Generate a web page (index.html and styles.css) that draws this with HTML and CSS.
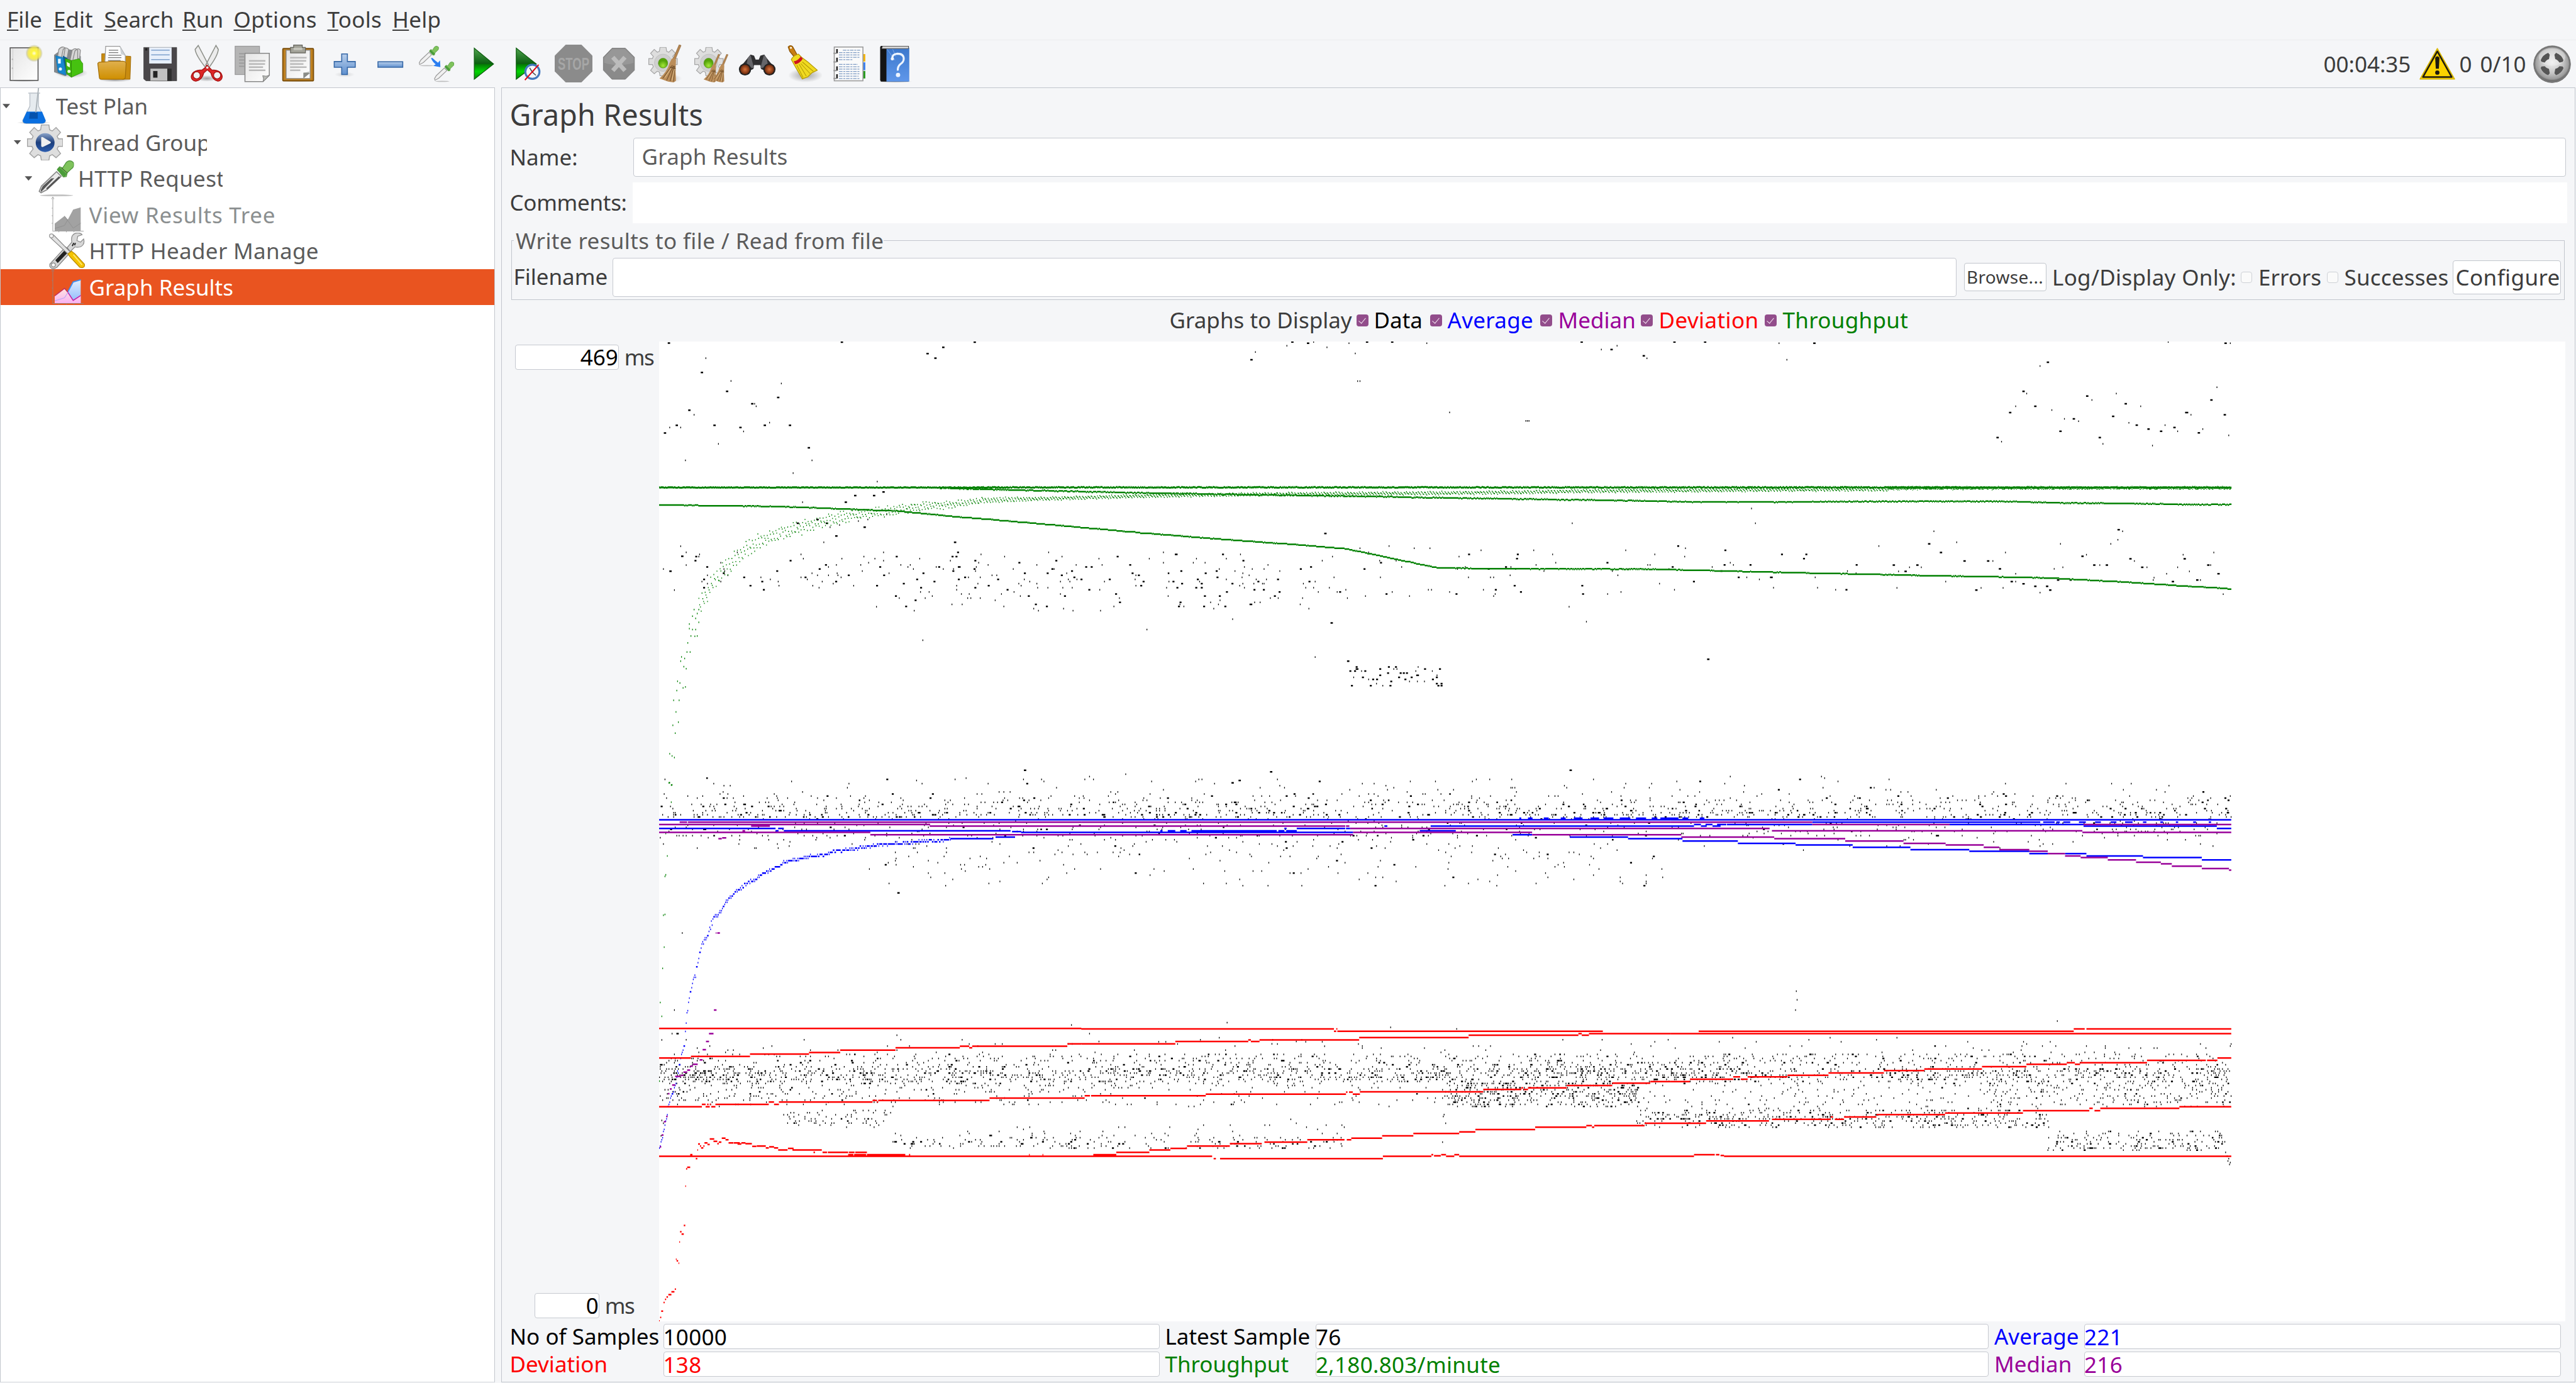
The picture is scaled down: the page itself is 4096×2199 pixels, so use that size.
FILE: index.html
```html
<!DOCTYPE html>
<html lang="en">
<head>
<meta charset="utf-8">
<title>Apache JMeter - Graph Results</title>
<link rel="stylesheet" href="styles.css">
</head>
<body>
<svg width="0" height="0" class="defs" aria-hidden="true">
  <defs>
    <linearGradient id="gPaper" x1="0" y1="0" x2="1" y2="1"><stop offset="0" stop-color="#e4e4e4"/><stop offset="1" stop-color="#fff"/></linearGradient>
    <linearGradient id="gGold" x1="0" y1="0" x2="0" y2="1"><stop offset="0" stop-color="#e0b04e"/><stop offset="1" stop-color="#cf8f00"/></linearGradient>
    <linearGradient id="gBlue" x1="0" y1="0" x2="0" y2="1"><stop offset="0" stop-color="#b9cfeb"/><stop offset="1" stop-color="#5f90cf"/></linearGradient>
    <linearGradient id="gPlay" x1="0" y1="0" x2="0" y2="1"><stop offset="0" stop-color="#4fa44f"/><stop offset=".5" stop-color="#0b5f10"/><stop offset=".52" stop-color="#047a04"/><stop offset=".75" stop-color="#03d503"/><stop offset="1" stop-color="#068a06"/></linearGradient>
    <linearGradient id="gHelp" x1="0" y1="0" x2="0" y2="1"><stop offset="0" stop-color="#3c78cc"/><stop offset="1" stop-color="#5f97ea"/></linearGradient>
    <radialGradient id="gSun"><stop offset="0" stop-color="#fffde0"/><stop offset=".3" stop-color="#fdf63c"/><stop offset=".7" stop-color="#f3e64a" stop-opacity=".85"/><stop offset="1" stop-color="#8c8a50" stop-opacity="0"/></radialGradient>
    <radialGradient id="gLime" cx=".5" cy=".75"><stop offset="0" stop-color="#a5e83a"/><stop offset="1" stop-color="#55a40a"/></radialGradient>
    <radialGradient id="gBall" cx=".5" cy=".45"><stop offset="0" stop-color="#f0f0f0"/><stop offset=".6" stop-color="#c4c4c4"/><stop offset=".9" stop-color="#9b9b9b"/><stop offset="1" stop-color="#666"/></radialGradient>
    <radialGradient id="gShade"><stop offset="0" stop-color="#000" stop-opacity=".35"/><stop offset="1" stop-color="#000" stop-opacity="0"/></radialGradient>
    <radialGradient id="gLens"><stop offset="0" stop-color="#d8713a"/><stop offset="1" stop-color="#6e2a0c"/></radialGradient>
    <linearGradient id="gNavy" x1="0" y1="0" x2="0" y2="1"><stop offset="0" stop-color="#8ba3c9"/><stop offset=".5" stop-color="#1d3f7c"/><stop offset="1" stop-color="#2c5db0"/></linearGradient>
    <linearGradient id="gPink" x1="0" y1="0" x2="0" y2="1"><stop offset="0" stop-color="#ffe4e0"/><stop offset="1" stop-color="#f9b2f3"/></linearGradient>
    <linearGradient id="gSky" x1="0" y1="0" x2="0" y2="1"><stop offset="0" stop-color="#e3efff"/><stop offset="1" stop-color="#8ab8fb"/></linearGradient>
    <symbol id="dropper" viewBox="0 0 96 96">
      <ellipse cx="50" cy="93" rx="44" ry="2.5" fill="#999" opacity=".6"/>
      <path d="M9 86 4 82 10 68 50 30 62 42 24 78Z" fill="#e9e9e9" stroke="#8a8a8a" stroke-width="3"/>
      <path d="M9 84 8 79 13 69 36 48 44 47 24 68Z" fill="#555"/>
      <path d="M24 76 58 44" stroke="#555" stroke-width="5"/>
      <path d="M52 24 58 17 66 20 76 5Q86-3 95 6 98 16 90 22L78 33 76 43 68 44Z" fill="#7fc35c" stroke="#4a9139" stroke-width="2"/>
      <path d="M51 26 57 18 77 36 71 44Z" fill="#4a9c3a"/>
      <path d="M63 20 79 34" stroke="#3d662f" stroke-width="2"/>
    </symbol>
    <symbol id="pale" viewBox="0 0 96 96">
      <ellipse cx="40" cy="93" rx="34" ry="2.5" fill="#999" opacity=".6"/>
      <path d="M6 88 4 80 12 66 50 30 62 42 24 78Z" fill="#f0f0f0" stroke="#9a9a9a" stroke-width="3.500"/>
      <path d="M52 24 58 17 66 20 76 5Q86-3 95 6 98 16 90 22L78 33 76 43 68 44Z" fill="#7fc35c" stroke="#4a9139" stroke-width="2"/>
      <path d="M51 26 57 18 77 36 71 44Z" fill="#4a9c3a"/>
    </symbol>
    <symbol id="gear" viewBox="0 0 96 96">
      <path d="M38 1H58L60 14 67 17 77 8 89 21 80 31 83 38H95V58H83L80 65 89 77 77 88 67 80 60 83 58 95H38L36 83 29 80 19 88 7 77 16 65 13 58H1V38H13L16 31 7 21 19 8 29 17 36 14Z" fill="#dedede" stroke="#a5a5a5" stroke-width="2.5"/>
    </symbol>
    <symbol id="areas" viewBox="0 0 96 96">
      <path d="M10 5V91H92M10 0 7 6M10 0 13 6M7 30H10M7 50H10M7 70H10M26 91V94M46 91V94M66 91V94" fill="none" stroke="#888" stroke-width="1.8" opacity=".75"/>
    </symbol>
    <symbol id="corn" viewBox="0 0 60 96">
      <path d="M52 0 57 2 42 38 36 37Z" fill="#b5854f" stroke="#85613a"/>
      <path d="M33 36Q38 32 44 38L43 66 44 92 38 96 24 94 2 86Q22 68 27 48Z" fill="#bb8d59"/>
      <path d="M35 52 10 86M37 54 20 91M39 54 29 93M41 54 38 94M28 57 43 61" stroke="#71502c" stroke-width="1.7" fill="none"/>
      <path d="M31 60 16 84M40 62 34 91" stroke="#e8c795" stroke-width="1.5"/>
    </symbol>
  </defs>
</svg>

<nav class="menubar">
  <span><u>F</u>ile</span><span><u>E</u>dit</span><span><u>S</u>earch</span><span><u>R</u>un</span><span class="wide"><u>O</u>ptions</span><span class="wide"><u>T</u>ools</span><span class="wide"><u>H</u>elp</span>
</nav>

<header class="toolbar">
  <div class="tools">
    <svg viewBox="0 0 96 96"><ellipse cx="48" cy="90" rx="42" ry="5" fill="url(#gShade)"/><rect x="13" y="8" width="71" height="83" fill="url(#gPaper)" stroke="#555" stroke-width="2.5"/><path d="M20 10V90" stroke="#ccc" stroke-width="1.5"/><circle cx="19" cy="37" r="2" fill="#bbb"/><circle cx="19" cy="60" r="2" fill="#bbb"/><circle cx="74" cy="22" r="22" fill="url(#gSun)"/></svg>
    <svg viewBox="0 0 96 96"><ellipse cx="52" cy="72" rx="42" ry="13" fill="url(#gShade)"/><path d="M8 26 30 10 60 14 76 30V60L36 80 8 70Z" fill="#85898c"/><path d="M17 30 20 12Q28 2 36 8L32 36M27 32 31 12Q38 4 45 12L40 40M48 42 54 14Q62 6 68 14V40M56 38 61 16Q70 6 75 14L73 34" fill="#d6d6d6" stroke="#8a8a8a" stroke-width="2"/><path d="M12 28 32 33 38 78 18 70Z" fill="#1787cf" stroke="#0b67a3"/><path d="M30 28 42 34 40 76 32 40Z" fill="#0b5e97"/><path d="M36 35 52 40V83L40 74Z" fill="#3db30c" stroke="#287d05"/><path d="M52 40 72 36 81 48V70L52 83Z" fill="#46c210" stroke="#287d05"/><path d="M40 44 48 48V58L41 54Z" fill="#e9ffe0"/><rect x="18" y="36" width="7" height="12" fill="#e8f6ff"/><circle cx="46" cy="68" r="4" fill="#e9ffe0"/><circle cx="24" cy="62" r="4" fill="#e8f6ff"/></svg>
    <svg viewBox="0 0 96 96"><ellipse cx="48" cy="90" rx="42" ry="5" fill="url(#gShade)"/><path d="M14 23H24V40H70L76 29 88 30 86 88 66 88 14 60Z" fill="#c98c10" stroke="#a06a05" stroke-width="1.5"/><path d="M24 4H60L74 28V46H22Z" fill="#fdfdfd" stroke="#999" stroke-width="2"/><path d="M60 4 74 28 63 24Z" fill="#ccd2d6"/><path d="M32 14H56M32 20H56M31 27H64M30 33H64M30 40H62" stroke="#777" stroke-width="2"/><path d="M4 48Q5 44 12 44 26 45 36 42H68Q76 43 76 48L74 84Q73 88 68 88H14Q8 88 8 84Z" fill="url(#gGold)" stroke="#a46f08" stroke-width="2"/></svg>
    <svg viewBox="0 0 96 96"><ellipse cx="48" cy="91" rx="44" ry="4" fill="url(#gShade)"/><path d="M4 7H88V92H10L4 87Z" fill="#4a474a" stroke="#333"/><rect x="18" y="7" width="57" height="41" fill="#e7effa"/><path d="M23 14H70M23 26H70M23 38H70" stroke="#7c9fcb" stroke-width="2.2"/><rect x="21" y="61" width="54" height="31" fill="#2e2e2e"/><rect x="21" y="61" width="43" height="31" fill="#c1c1c1"/><rect x="28" y="67" width="11" height="17" fill="#222"/><rect x="8" y="9" width="5" height="6" fill="#222"/></svg>
    <svg viewBox="0 0 96 96"><ellipse cx="48" cy="86" rx="28" ry="8" fill="url(#gShade)"/><path d="M26 2 52 52 46 60Q20 28 18 12ZM71 2 45 52 52 60Q76 28 77 12Z" fill="#ececec" stroke="#8c8f88" stroke-width="2.5"/><path d="M44 58 48 52 54 58 60 64Q86 64 87 82 86 92 76 93 62 90 58 72L49 64 40 72Q36 90 20 93 9 92 8 82 10 64 36 64Z" fill="#dc2626" stroke="#a51212" stroke-width="2"/><ellipse cx="22" cy="78" rx="9" ry="9" fill="#f1f1f1" stroke="#a51212" stroke-width="2"/><ellipse cx="74" cy="78" rx="9" ry="9" fill="#f1f1f1" stroke="#a51212" stroke-width="2"/><circle cx="49" cy="58" r="3" fill="#eee"/></svg>
    <svg viewBox="0 0 96 96"><rect x="3" y="4" width="62" height="72" fill="#b5b5b5" stroke="#999" stroke-width="2"/><path d="M13 23H26M13 31H26M13 39H26M13 47H26M13 55H26" stroke="#999" stroke-width="3"/><path d="M28 22H90V78L74 94H28Z" fill="url(#gPaper)" stroke="#888" stroke-width="2.5"/><path d="M38 41H80M38 49H79M38 57H74M38 65H80" stroke="#b9b9b9" stroke-width="4"/><path d="M90 78 74 94Q77 86 73 79 82 82 90 78Z" fill="#b8bab5" stroke="#777" stroke-width="1.5"/></svg>
    <svg viewBox="0 0 96 96"><ellipse cx="48" cy="91" rx="44" ry="4" fill="url(#gShade)"/><rect x="7.500" y="10" width="78" height="82" rx="2" fill="#bf8120" stroke="#7c4f0b" stroke-width="3"/><path d="M16 14H77V86H16Z" fill="url(#gPaper)" stroke="#888" stroke-width="2"/><path d="M26 33H68M26 41H67M26 49H60M26 57H68M26 65H52" stroke="#bbb" stroke-width="4"/><path d="M60 86V72L77 68Z" fill="#b8bab5"/><path d="M77 72 60 86V71Z" fill="#8a8c87"/><path d="M35 1H57V7H65V21H27V7H35Z" fill="#a2a298" stroke="#63635b" stroke-width="2"/><rect x="35" y="8" width="22" height="6" fill="#c4c4bb"/></svg>
    <svg viewBox="0 0 96 96"><ellipse cx="48" cy="76" rx="26" ry="7" fill="url(#gShade)" opacity=".4"/><path d="M40.500 23.500H55V43H75V57.500H55V76H40.500V57.500H21.500V43H40.500Z" fill="url(#gBlue)" stroke="#3567a6" stroke-width="2.5"/></svg>
    <svg viewBox="0 0 96 96"><rect x="16" y="43.500" width="63" height="14" fill="url(#gBlue)" stroke="#3567a6" stroke-width="2.5"/></svg>
    <svg viewBox="0 0 96 96"><use href="#pale" x="2" y="2" width="52" height="54"/><use href="#pale" x="41" y="42" width="52" height="54"/><path d="M34 34Q38 44 46 50L40 54 58 57 57 40 52 46Q44 40 38 34Z" fill="#2b7df0"/></svg>
    <svg viewBox="0 0 96 96"><path d="M29 9V88L78 49Z" fill="url(#gPlay)" stroke="#0a5a0a" stroke-width="2"/></svg>
    <svg viewBox="0 0 96 96"><path d="M19 9V88L70 49Z" fill="url(#gPlay)" stroke="#0a5a0a" stroke-width="2"/><circle cx="60" cy="69" r="18" fill="#f4f7fb" stroke="#4379bd" stroke-width="5"/><path d="M53 59 60 70 69 78M60 70 66 62" stroke="#444" stroke-width="2.5" fill="none"/><path d="M76 51 41 90" stroke="#e30613" stroke-width="3"/></svg>
    <svg viewBox="0 0 96 96"><path d="M28 0H68L96 28V68L68 96H28L0 68V28Z" fill="#8b8b8b"/><text x="48" y="64" class="stop" text-anchor="middle" textLength="80" lengthAdjust="spacingAndGlyphs">STOP</text></svg>
    <svg viewBox="0 0 96 96"><path d="M29 9H63L86 32V65L63 88H29L7 65V32Z" fill="#8a8a8a" stroke="#777" stroke-width="1.500"/><path d="M9 33 30 11H62L84 33V46Q46 58 9 46Z" fill="#a0a0a0" opacity=".6"/><path d="M31 32 62 66M62 32 31 66" stroke="#bcbcbc" stroke-width="11"/></svg>
    <svg viewBox="0 0 96 96"><use href="#gear" x="1" y="6" width="82" height="74"/><circle cx="42" cy="46" r="22" fill="#cfcfcf" stroke="#b8b8b8"/><ellipse cx="42" cy="47" rx="12" ry="12.500" fill="url(#gLime)" stroke="#4b8a12"/><ellipse cx="68" cy="86" rx="22" ry="10" fill="url(#gShade)" opacity=".4"/><use href="#corn" x="31" y="0" width="60" height="96"/></svg>
    <svg viewBox="0 0 96 96"><use href="#gear" x="1" y="6" width="82" height="74"/><circle cx="42" cy="46" r="22" fill="#cfcfcf" stroke="#b8b8b8"/><ellipse cx="41" cy="47" rx="12" ry="12.500" fill="url(#gLime)" stroke="#4b8a12"/><use href="#corn" x="27" y="24" width="45" height="72"/><use href="#corn" x="48" y="24" width="45" height="72"/></svg>
    <svg viewBox="0 0 96 96"><path d="M24 34 31 25 40 28 44 38H52L56 28 66 25 72 34 95 62 76 70 58 62 56 52H40L38 62 20 70 1 62Z" fill="#2f2f31"/><path d="M24 34 31 26 40 60 20 56Z" fill="#66666a"/><path d="M72 34 65 26 56 60 76 56Z" fill="#66666a"/><circle cx="17" cy="63" r="15.500" fill="#222"/><circle cx="79" cy="63" r="15.500" fill="#222"/><circle cx="17" cy="63" r="12" fill="url(#gLens)"/><circle cx="79" cy="63" r="12" fill="url(#gLens)"/></svg>
    <svg viewBox="0 0 96 96"><ellipse cx="54" cy="78" rx="44" ry="18" fill="url(#gShade)"/><path d="M10 6Q16-1 22 6L34 28 26 32 14 17Z" fill="#c77f14" stroke="#8a5206" stroke-width="2"/><circle cx="17" cy="8" r="2.500" fill="#fff"/><path d="M18 38Q22 28 36 24L44 32 60 44 84 65 70 72 60 82 46 87 28 56Z" fill="#f0da1f" stroke="#b59a08" stroke-width="2"/><path d="M32 52 48 84M38 50 56 80M42 48 66 74M46 44 74 68" stroke="#b59a08" stroke-width="1.700"/><path d="M24 42Q34 42 42 30L47 36Q40 48 28 50Z" fill="#cf1420"/></svg>
    <svg viewBox="0 0 96 96"><rect x="82" y="24" width="9" height="19" fill="#f3b40b"/><rect x="82" y="45" width="9" height="20" fill="#3b80ee"/><rect x="82" y="67" width="9" height="19" fill="#26991c"/><rect x="12" y="6" width="73" height="86" fill="#fafafa" stroke="#9a9a9a" stroke-width="2.500"/><path d="M34 14H78M24 20H78M24 26H78M24 32H78M24 38H58M24 50H72M24 56H78M24 62H76M24 68H78M24 74H78M24 80H74M24 86H78" stroke="#7f9cc4" stroke-width="2" stroke-dasharray="9 2 5 2"/><path d="M19 11V22M19 33V44M19 55V66M19 75V86" stroke="#222" stroke-width="4"/><path d="M10 22H18M10 44H18M10 66H18M10 86H18" stroke="#999" stroke-width="3"/></svg>
    <svg viewBox="0 0 96 96"><ellipse cx="50" cy="94" rx="44" ry="3" fill="url(#gShade)"/><path d="M14 3H85V92Q85 94 82 94H14L12 90V6Z" fill="#141414"/><path d="M28 8H86V94H28Z" fill="url(#gHelp)"/><path d="M18 4H84V10H16Z" fill="#d8d8d8" stroke="#555" stroke-width="1.500"/><path d="M30 12 50 40M44 12 52 30" stroke="#9cc0f4" stroke-width="1"/><path d="M43 36Q42 24 56 23 72 23 72 36 72 44 63 50 56 56 57 66" fill="none" stroke="#eef5ff" stroke-width="5"/><circle cx="43" cy="36" r="4" fill="#eef5ff"/><circle cx="57.500" cy="77" r="5.500" fill="#eef5ff"/></svg>
  </div>
  <div class="status">
    <span class="clock">00:04:35</span>
    <svg class="warn" viewBox="0 0 92 82"><path d="M46 2 90 80H2Z" fill="#fbd300" stroke="#d7b600" stroke-width="3" stroke-linejoin="round"/><path d="M46 9 83 75H9Z" fill="#fbd300" stroke="#1d1a10" stroke-width="4" stroke-linejoin="round"/><path d="M42 26Q46 20 50 26L48.500 52H43.500Z" fill="#1d1a10" stroke="#1d1a10" stroke-width="3"/><circle cx="46" cy="63.500" r="5.500" fill="#1d1a10"/></svg>
    <span class="errs">0</span>
    <span class="thr">0/10</span>
    <svg class="ball" viewBox="0 0 96 96"><circle cx="48" cy="48" r="47.500" fill="url(#gBall)"/><circle cx="48" cy="48" r="45" fill="none" stroke="#777" stroke-width="4"/><ellipse cx="48" cy="30" rx="34" ry="22" fill="#f4f4f4" opacity=".4"/><path d="M38 19 42 24 40 35Q33 37 29 44L21 42 19 38Q24 24 38 19ZM58 19 54 24 56 35Q63 37 67 44L75 42 77 38Q72 24 58 19ZM38 76 42 71 40 60Q33 58 29 53L21 54 19 58Q24 71 38 76ZM58 76 54 71 56 60Q63 58 67 53L75 54 77 58Q72 71 58 76Z" fill="#555"/></svg>
  </div>
</header>

<main class="work">
  <aside class="tree">
    <div class="row d0"><i></i><svg viewBox="0 0 92 92"><ellipse cx="46" cy="88" rx="44" ry="4" fill="url(#gShade)"/><path d="M36 13H58V46L75 82Q77 89 68 90H26Q17 89 18 82L36 46Z" fill="#e6ebef" stroke="#b4bcc4" stroke-width="2"/><path d="M28 60H67L76 82Q76 89 68 90H26Q17 89 18 82Z" fill="#0a6fe0"/><path d="M36 62H56V78H34Z" fill="#0552ad"/><path d="M32 13H62" stroke="#c5ccd2" stroke-width="3"/><path d="M51 62 58 0" stroke="#aab2b8" stroke-width="3"/></svg><span>Test Plan</span></div>
    <div class="row d1"><i></i><svg viewBox="0 0 92 92"><use href="#gear" width="92" height="92"/><circle cx="46" cy="46" r="24" fill="url(#gNavy)"/><path d="M36 33Q37 30 42 33L60 44Q62 46 59 48L40 57Q36 58 36 54Z" fill="#f0f0f0"/></svg><span>Thread Group</span></div>
    <div class="row d2"><i></i><svg viewBox="0 0 92 92"><use href="#dropper" width="92" height="92"/></svg><span>HTTP Request</span></div>
    <div class="row d3 off"><i></i><svg viewBox="0 0 96 96"><use href="#areas"/><path d="M15 71 41 51 50 60 64 34 84 28V90H15Z" fill="#a2a2a2"/><path d="M41 51 64 83 84 70M15 84 41 76 50 60" fill="none" stroke="#8f8f8f" stroke-width="1.500"/></svg><span>View Results Tree</span></div>
    <div class="row d3 hdr"><i></i><svg viewBox="0 0 92 92"><path d="M2 80 42 36 56 48 20 88Q8 96 2 86Z" fill="#d2d2d2" stroke="#858585" stroke-width="2"/><path d="M16 70 48 36 56 42 22 77Z" fill="#222"/><circle cx="11" cy="82" r="5" fill="#fff" stroke="#888" stroke-width="2"/><path d="M46 38 58 24Q54 6 68 1 80-1 84 5L73 9 71 20 80 24 88 16Q92 30 80 36 70 38 66 36L54 48Z" fill="#d8d8d8" stroke="#8d8d8d" stroke-width="2"/><path d="M59 34 63 26M65 32 67 26" stroke="#222" stroke-width="3"/><path d="M4 13 48 54 54 49 12 6Z" fill="#e2e2e2" stroke="#888" stroke-width="2"/><circle cx="6" cy="8" r="5" fill="#f2f2f2" stroke="#999" stroke-width="2"/><path d="M48 54 57 47 66 54 90 80Q92 88 84 89L78 88 54 62Z" fill="#f5c400" stroke="#b98a00" stroke-width="2"/><path d="M62 56 84 82" stroke="#ffe873" stroke-width="3"/></svg><span>HTTP Header Manage</span></div>
    <div class="row d3 sel"><i></i><svg viewBox="0 0 96 96"><use href="#areas"/><path d="M15 84 41 76 50 60 64 34 84 28V90H15Z" fill="url(#gSky)"/><path d="M50 60 64 34 84 28" fill="none" stroke="#3f8ff0" stroke-width="3"/><path d="M15 71 41 51 64 83 84 70V90H15Z" fill="url(#gPink)"/><path d="M15 71 41 51 50 61" fill="none" stroke="#c22f5d" stroke-width="2.500"/><path d="M49 60 64 83 84 70" fill="none" stroke="#c01fa5" stroke-width="2.500"/><path d="M15 84 41 76 50 62" fill="none" stroke="#bfaaf5" stroke-width="2"/></svg><span>Graph Results</span></div>
  </aside>

  <section class="panel">
    <h1>Graph Results</h1>
    <div class="field name"><label>Name:</label><div class="box">Graph Results</div></div>
    <div class="field comments"><label>Comments:</label><div class="box"></div></div>
    <fieldset>
      <legend>Write results to file / Read from file</legend>
      <div class="file">
        <label>Filename</label><div class="box path"></div>
        <span class="btn browse">Browse...</span>
        <span class="only">Log/Display Only:</span>
        <b class="chk"></b><span class="err">Errors</span>
        <b class="chk"></b><span class="suc">Successes</span>
        <span class="btn conf">Configure</span>
      </div>
    </fieldset>
    <div class="legend">
      <span>Graphs to Display</span>
      <b></b><span class="k">Data</span>
      <b></b><span class="bl">Average</span>
      <b></b><span class="pu">Median</span>
      <b></b><span class="rd">Deviation</span>
      <b></b><span class="gr">Throughput</span>
    </div>
    <div class="chart">
      <div class="axis">
        <div><span class="box num">469</span><em>ms</em></div>
        <div class="low"><span class="box num">0</span><em>ms</em></div>
      </div>
      <svg id="plot" viewBox="1676 868 4850 2494" preserveAspectRatio="none"></svg>
    </div>
    <div class="totals">
      <span class="k">No of Samples</span><span class="box k">10000</span>
      <span class="k mid">Latest Sample</span><span class="box k">76</span>
      <span class="bl mid">Average</span><span class="box bl">221</span>
      <span class="rd">Deviation</span><span class="box rd">138</span>
      <span class="gr mid">Throughput</span><span class="box gr">2,180.803/minute</span>
      <span class="pu mid">Median</span><span class="box pu">216</span>
    </div>
  </section>
</main>
<script src="plot.js"></script>
</body>
</html>
```
FILE: styles.css
```css
* { box-sizing: border-box; margin: 0; padding: 0; }
html, body { width: 4096px; height: 2199px; overflow: hidden; }
body {
  background: #f5f6f8; color: #3c3c3c;
  font: 35px/48px "Noto Sans", sans-serif;
  display: flex; flex-direction: column;
}
.defs { position: absolute; }
span, label, legend, h1, em { white-space: nowrap; }
svg { display: block; flex: none; }

.menubar {
  height: 64px; border-bottom: 1px solid #ebedef; padding: 7px 0 0 11px;
  display: grid; grid-template-columns: 74px 80.500px 124.500px 81.500px 149px 103.500px 100px;
}
.menubar u { text-decoration-thickness: 2px; text-underline-offset: 3px; }
.menubar .wide { letter-spacing: .3px; }

.toolbar { height: 75px; display: flex; justify-content: space-between; padding: 7px 8px 0 7.700px; }
.tools { display: flex; gap: 12.875px; }
.tools svg, .ball { width: 60px; height: 60px; }
.stop { font: bold 43px "Liberation Sans", sans-serif; fill: #a6a6a6; }
.status { display: flex; height: 60px; align-items: center; padding-top: 1px; }
.clock { width: 138px; margin-right: 14px; }
.warn { width: 57px; height: 51px; }
.errs { width: 33px; margin: 0 0 0 7px; }
.thr { width: 73px; margin: 0 11.500px 0 0; }

.work { flex: 1; display: flex; gap: 10px; padding-bottom: 1px; min-height: 0; }
.tree { width: 786.500px; background: #fff; border: 1px solid #c2c6cd; border-bottom-color: #d5d8dc; }
.row { height: 57.500px; display: flex; align-items: center; color: #5b5b5b; }
.row i { width: 12px; height: 7px; background: #555; clip-path: polygon(0 0, 100% 0, 50% 100%); margin-right: 9px; }
.row svg { width: 57.500px; height: 57.500px; margin-right: 6px; }
.row span { overflow-x: clip; padding-top: 1px; }
.d0 { padding-left: 3px; }
.d1 { padding-left: 20.700px; } .d1 span { width: 223px; }
.d2 { padding-left: 38.400px; } .d2 span { width: 230px; letter-spacing: .3px; }
.d3 { padding-left: 56px; }
.d3 i { background: none; }
.hdr { letter-spacing: .3px; }
.off { color: #8b8f90; letter-spacing: .75px; }
.sel { background: #e95420; color: #fff; }

.panel { width: 3298.500px; border: 1px solid #c2c6cd; display: flex; flex-direction: column; }
h1 { font-size: 46.500px; font-weight: 400; height: 79px; line-height: 84px; padding-left: 13px; letter-spacing: .2px; }
.box { background: #fff; border: 1px solid #c6c9d0; border-radius: 4px; }
.field { display: flex; align-items: center; padding-left: 13px; }
.field label { padding-bottom: 1px; }
.name { height: 62px; }
.name label { width: 105px; margin-right: 91px; }
.name .box { width: 3073px; height: 62px; line-height: 58px; padding-left: 13px; color: #5c5c5c; letter-spacing: .2px; }
.comments { height: 65px; margin-top: 9px; }
.comments label { width: 187px; margin-right: 8px; letter-spacing: -.3px; }
.comments .box { width: 3076px; height: 65px; border: 0; border-radius: 0; }

fieldset { margin: 3.500px 0 0 15.500px; width: 3265px; height: 118px; border: 1px solid #c2c6cd; padding: 3px 0 0 5px; min-width: 0; }
legend { margin-left: -2px; padding: 0 3px; height: 48px; line-height: 48px; width: 588px; overflow-x: clip; color: #5b5b5b; letter-spacing: .38px; }
.file { display: flex; align-items: center; height: 62px; }
.file > label { width: 150px; margin: 0 7.500px 0 -2.500px; padding-bottom: 1px; }
.path { width: 2137px; height: 62px; margin-right: 12px; }
.btn { background: #fff; border: 1px solid #c2c6cd; border-radius: 4px; }
.browse { width: 131px; height: 45px; font-size: 28px; line-height: 42px; padding-left: 3px; margin-right: 9px; letter-spacing: .3px; }
.only { width: 292px; margin-right: 8px; letter-spacing: .3px; }
.chk { width: 18px; height: 18px; border: 1px solid #ced1d6; border-radius: 4px; background: #fafafa; }
.err { width: 99px; margin: 0 9.500px 0 10px; }
.suc { width: 164px; margin: 0 8px 0 10px; letter-spacing: .2px; }
.conf { width: 172.500px; height: 54px; line-height: 51px; padding-left: 4px; letter-spacing: .4px; }

.legend { height: 66px; padding: 0 0 1px 1062px; display: grid; align-items: center; justify-items: start;
  grid-template-columns: 297px 28px 89px 28px 147px 29px 131px 29px 168px 29px 240px; }
.legend .rd { letter-spacing: .4px; } .legend .bl, .legend .gr { letter-spacing: .3px; }
.legend b { width: 19px; height: 19px; border-radius: 4px; background: #924d8b; display: grid; place-items: center; }
.legend b::after { content: ""; width: 5px; height: 10px; border: solid #f3e6f2; border-width: 0 1.500px 1.500px 0; transform: translateY(-1px) rotate(40deg); }
.k { color: #000; } .bl { color: #00f; } .pu { color: #909; } .rd { color: #f00; } .gr { color: #008000; }

.chart { display: flex; height: 1558.500px; }
.axis { width: 250.300px; padding: 5.500px 8px 5.500px 0; display: flex; flex-direction: column; justify-content: space-between; }
.axis div { display: flex; justify-content: flex-end; }
.axis .low { padding-right: 31px; }
.num { width: 165px; height: 40px; line-height: 38px; color: #000; text-align: right; }
.low .num { width: 103px; }
em { font-style: normal; margin-left: 9px; width: 47px; line-height: 40px; letter-spacing: -1.500px; }
#plot { width: 3031.500px; height: 1558.500px; background: #fff; }

.totals { display: grid; padding: 4px 0 0 13px; row-gap: 4px; grid-auto-rows: 40px;
  grid-template-columns: 244px 789px 248.500px 1070px 152px 758px; }
.totals span { line-height: 39px; }
.totals .mid { padding-left: 9px; }
.totals .box { text-indent: -1px; letter-spacing: .3px; }
```
FILE: plot.js
```js
const NS = 'http://www.w3.org/2000/svg';
const plot = document.getElementById('plot');
const layers = {};
['#000', '#008000', '#00f', '#909', '#f00'].forEach(c => (layers[c] = []));

// chart tiles: origin x, scale x, origin y, scale y
const A = [1250, 0.9566, 1950, 1], B = [2750, 0.9566, 1950, 1], C = [4250, 1.468, 1950, 1];
const D = [1250, 0.7972, 800, 0.8291], E = [2900, 1.3393, 750, 0.6378], F = [4800, 0.574, 860, 0.574];
const X = (t, x) => t[0] + x * t[1];
const Y = (t, y) => t[2] + y * t[3];

let seed = 4711;
const rnd = () => ((seed = (seed * 1103515245 + 12345) % 2147483648) / 2147483648);

const rect = (c, x, y, w, h) => layers[c].push(`M${x.toFixed(1)} ${y.toFixed(1)}h${w}v${h}h${-w}z`);
const dot = (x, y, w = 2, c = '#000') => rect(c, Math.round(x / 2) * 2, y - 2, w, 4);

// horizontal runs: x0,x1,y triples separated by spaces
function runs(c, t, text) {
  text.split(' ').forEach(s => {
    const [a, b, y] = s.split(',').map(Number);
    rect(c, X(t, a), Y(t, y) - 2, +((b - a) * t[1]).toFixed(1), 4);
  });
}
function dots(c, t, text) {
  text.split(' ').forEach(s => {
    const wide = s.endsWith('w');
    const [x, y] = s.replace('w', '').split(',').map(Number);
    dot(X(t, x) - (wide ? 3 : 1), Y(t, y), wide ? 6 : 2, c);
  });
}
const lerp = (pts, x) => {
  for (let i = 1; i < pts.length; i++) if (x <= pts[i][0]) {
    const [a, b] = [pts[i - 1], pts[i]];
    return a[1] + (b[1] - a[1]) * (x - a[0]) / (b[0] - a[0]);
  }
  return pts[pts.length - 1][1];
};
const place = (t, text) => text.split(' ').map(s => s.split(',').map(Number)).map(p => [X(t, p[0]), Y(t, p[1])]);
function trace(c, pts, jitter, step = 2, h = 4) {
  for (let x = pts[0][0]; x < pts[pts.length - 1][0]; x += 2) {
    const y = lerp(pts, x) + (rnd() - 0.5) * jitter;
    rect(c, x, Math.round(y / step) * step - h / 2, 2, h);
  }
}
// random samples; bias bends the distribution towards y1
function scatter(n, x0, x1, y0, y1, bias = 1, wide = 0) {
  for (let i = 0; i < n; i++) {
    const y = y0 + (y1 - y0) * Math.pow(rnd(), 1 / bias);
    dot(x0 + rnd() * (x1 - x0), Math.round(y / 5.3) * 5.3, rnd() < wide ? 5 : 2);
  }
}

// samples around the average
scatter(1120, 1676, 5676, 2005, 2082, 2.2, 0.12);
scatter(170, 1676, 5676, 1980, 2060, 1, 0.1);
scatter(330, 1676, 5676, 2090, 2128, 1, 0.05);
scatter(250, 2210, 4250, 2125, 2255, 0.9, 0.1);
scatter(30, 1676, 2250, 2120, 2160, 1);
scatter(60, 4250, 5676, 2110, 2165, 0.7);
// samples in the lower band
scatter(1450, 1676, 5676, 2680, 2755, 1.1, 0.1);
scatter(700, 1676, 5676, 2718, 2745, 1, 0.1);
scatter(150, 1676, 5676, 2640, 2690, 1.4);
scatter(330, 1676, 2950, 2740, 2812, 0.8);
scatter(80, 1676, 2000, 2700, 2812);
scatter(90, 2950, 3680, 2740, 2815);
scatter(430, 3680, 4170, 2752, 2815, 1, 0.1);
scatter(110, 3880, 4480, 2700, 2750, 1, 0.1);
scatter(200, 4170, 5100, 2755, 2850);
scatter(400, 4160, 5210, 2822, 2868, 1.2, 0.1);
scatter(250, 5060, 5676, 2750, 2815);
scatter(80, 1990, 2265, 2825, 2866);
scatter(190, 2270, 3420, 2888, 2922, 1.3, 0.15);
scatter(45, 2270, 3420, 2862, 2900);
scatter(190, 5205, 5665, 2875, 2925, 1.4, 0.1);
// slow samples
scatter(150, 1750, 3430, 1405, 1500, 1, 0.4);
scatter(130, 2260, 3430, 1440, 1555, 1, 0.4);
scatter(90, 3430, 4790, 1385, 1515, 1, 0.35);
scatter(48, 3432, 3672, 1694, 1745, 1, 0.75);

dots('#000', D, '566,87w 684,133 672,177w 765,203 752,235w 925,211 915,254w 832,273w 838,273 845,281 632,293w 645,307 591,339w 604,346 567,346 554,363w 712,339w 793,346w 805,358 872,339w 887,331 951,339w 725,396 1013,408w 1023,447 619,447 961,486 1231,512 1251,544w 1221,555w 1161,555w 1129,575w 991,575 1117,84w 1541,84w 1391,119w 1416,133w 1441,100w 978,640w 1041,628w 1071,640w 1081,652 1101,679w 1110,645 1171,633 1191,652w 1201,628 1261,613 1061,698 1478,698w 1229,896 1375,999 687,1422 1357,1429 1515,1422 534,845 547,780 570,787w 584,845 604,710 608,741w 622,729 622,768');
dots('#000', E, '289,187w 319,192w 329,187 431,187w 479,187w 396,192 545,192 278,202 355,208 219,227 408,233 212,258w 838,187w 1014,187w 1073,187w 876,217 895,217w 906,202 957,242w 963,252 1214,192 1281,192w 1229,258 413,343 418,343 587,468 733,502 736,502 739,502 1161,851 820,910 1169,910 352,951w 12,1334 175,1293 364,1308w 848,1303 814,1243 333,1444 395,1460w 1079,1453w');
dots('#000', F, '1247,16 1501,22w 1522,22 714,106w 679,123 606,235w 620,245 1460,217 888,256w 906,273 1017,245 568,301 547,329w 658,301w 731,318 787,357 826,357w 850,367 1000,346w 1056,290w 1122,301 1073,374 1108,385w 1160,402w 1216,412w 1233,385 1272,395w 1289,412 1325,329w 1334,329 1348,339 1439,273w 1498,339w 1400,402 1383,419w 1515,430 770,412w 944,440w 958,468 1177,475 491,440w 508,458 206,855 1026,848w 1045,855 1024,893 993,911 770,911 186,911w 310,904 238,949w 526,949 865,966w 885,959 1446,949 1313,959 1318,977w 1078,977w 1097,987 343,987w 447,987w 467,987 29,1005w 134,1005w 153,1015 101,1015 81,1033w 49,1033 500,1022w 742,1022 780,1015 918,1005w 941,1005 973,1005w 1130,1015w 1150,1015 1289,1015 1423,1005w 1435,1005 1341,1033 1237,1043 1468,1043w 571,1043 258,1078 552,1078w 571,1078 604,1088w 395,1116w 415,1106 515,1106 656,1099w 709,1099w 723,1116w 676,1127 757,1071w 814,1071w 1180,1071 1184,1061 1266,1078w 1374,1071w 1390,1071 1491,1134 45,1106');
dots('#000', A, '508,423 487,619 1082,321w 479,679 495,679w 452,695 1077,683 1541,657 1418,9w 573,29 450,939 453,900 457,907');
dots('#000', B, '387,651 822,663 999,667 21,679 47,699 571,699 508,705 648,711 504,13w 22,25 118,19 403,41w 421,35w 1302,9w 960,955 970,907 962,890 965,885 557,897 571,907');
dots('#000', C, '217,571 219,593 216,619 669,647 961,981 964,991 966,997 965,1003 970,1007 968,1012 103,25 261,25 266,29');

// throughput
trace('#008000', place(D, '534,530 1568,530'), 1.5, 1, 5);
trace('#008000', place(E, '-300,767 1568,767'), 2.5, 1, 5);
trace('#008000', place(F, '0,661 1524,661'), 2, 1, 5.500);
trace('#008000', place(F, '0,668 1524,666'), 4, 2, 2);
trace('#008000', [[2390, 1241], [2500, 1244], ...place(E, '0,789 230,797 400,802 560,808 930,820 1050,825 1220,825 1418,823'), ...place(F, '0,723 530,723 700,727 800,730 1060,732 1300,736 1524,737')], 2, 2, 4);
trace('#008000', [...place(D, '534,583 700,586 900,588 1050,593 1200,599 1290,602 1400,612 1480,620 1568,626'), ...place(E, '0,948 100,965 200,981 300,996 390,1012 450,1038 500,1060 565,1088 700,1092 970,1093 1100,1100 1300,1110 1418,1115'), ...place(F, '0,1047 230,1053 400,1055 570,1059 720,1062 840,1069 1030,1079 1200,1090 1320,1098 1430,1104 1500,1108 1524,1113')], 1, 2, 4);
const ramp = [...place(D, '660,900 670,880 690,850 710,812 730,792 760,765 800,728 850,697 900,678 950,662 1000,648 1050,635 1100,625 1150,615 1200,608 1265,602 1340,590 1400,585 1470,582 1568,568'), ...place(E, '0,800 100,796 250,792 400,790 560,788 700,785 850,780 1000,778 1200,775 1418,773')];
for (let x = ramp[0][0], i = 0; x < 4800; x += 2, i++) {
  const amp = Math.max(7, 38 - (x - 1776) * 0.036);
  const saw = ((i * 4) % 15) / 15 - 0.5 + (rnd() - 0.5) * 0.25;
  rect('#008000', x, lerp(ramp, x) + saw * amp * 1.2, 2, 3);
}
dots('#008000', A, '447,800 452,635 449,600 454,513 458,459 456,378 460,376 463,275 461,279 468,227 464,170 477,90 479,46 472,41');
dots('#008000', D, '567,1436 573,1443 569,1347 577,1354 584,1359 579,1260 587,1284 597,1250 589,1219 581,1183 599,1183 591,1153 610,1145 618,1142 594,1125 602,1130 613,1080 622,1086 604,1063 616,1055 606,1050 624,1035 634,1035 627,1007 637,986 648,987 657,986 630,963 640,966 650,966 631,949 660,944 642,925 652,932 645,905 655,917 662,905');

// average
runs('#00f', A, '445,1568,135 445,755,157 755,763,163 762,777,157 777,1380,163 1384,1408,165 1408,1568,167 1220,1334,183 1340,1392,179');
runs('#00f', B, '0,1568,135 0,723,167 210,216,163 230,250,163 263,280,163 293,520,163 524,540,163 545,573,163 540,546,157 573,702,157 704,715,157 806,814,151 900,996,163 929,1568,151 1147,1199,173 1299,1454,179 1454,1568,183 1165,1170,131 1188,1200,131 1230,1243,131 1275,1288,131 1310,1333,131 1354,1377,131 1389,1415,131 1432,1460,131 1475,1502,131 1517,1532,131 1540,1568,131');
runs('#00f', C, '0,971,135 0,13,131 20,30,131 50,58,131 0,40,151 40,52,147 52,62,151 60,72,147 72,86,151 80,96,147 97,245,147 245,640,141 645,665,141 668,674,141 680,692,141 707,719,141 735,745,141 762,772,141 787,800,141 818,824,141 848,853,141 875,879,141 905,910,141 932,936,141 483,715,147 715,946,151 946,971,157 0,20,183 20,116,189 116,216,195 216,315,199 315,415,205 415,517,211 517,621,215 621,653,221 683,720,221 720,818,227 818,920,231 920,971,237');
for (const [p, j] of [
  [place(A, '446,970 450,960 455,935 462,900 467,880 472,855 480,835 487,815 492,790 500,755 505,735 513,705 516,663 518,631 523,603 529,571 533,551 542,529 547,503 553,475 560,455 566,439 575,430 584,399 595,380'), 14],
  [place(A, '595,380 607,370 617,350 630,336 650,317 660,311 680,294 700,288 720,272 740,262 755,257 780,240 810,237 840,229 880,224 920,214 960,208 1000,204 1030,198 1080,195 1130,191 1200,187 1220,183'), 7]
]) for (let x = p[0][0]; x < p[p.length - 1][0]; x += 2) {
  dot(x, Math.round((lerp(p, x) + (rnd() - 0.5) * j) / 5.3) * 5.3, 2, '#00f');
}

// median
runs('#909', A, '500,520,141 522,1568,141 445,1155,147 1155,1166,147 1165,1568,151 690,740,151 445,1007,167 1007,1568,173 447,451,967 452,457,937 458,463,903 464,468,890 469,473,832 474,479,820 480,488,810 488,503,788 503,510,785 510,520,777 520,528,772 528,535,762 535,548,757 553,561,746 561,570,720 570,578,699 578,590,679 591,598,619 596,598,423 600,607,423 603,612,183 613,624,181 667,674,163');
runs('#909', B, '0,1568,141 0,702,151 704,713,151 715,1568,157 0,723,173 723,1199,167 1199,1568,173');
runs('#909', C, '0,245,141 245,483,147 715,971,147 0,171,157 175,713,163 713,971,167 0,18,173 18,179,179 179,302,183 302,403,189 403,476,195 476,542,199 542,569,205 569,621,211 621,653,215 653,683,221 683,710,227 710,757,231 757,806,237 806,849,243 849,868,247 868,920,253 920,967,259 967,971,263');

// deviation
runs('#f00', A, '445,1568,666 445,530,741 530,687,737 687,844,731 844,927,727 927,1074,721 1074,1245,715 1245,1270,711 1270,1278,715 1278,1531,711 1531,1568,705 445,559,865 559,569,859 573,577,859 580,583,859 569,580,865 584,595,865 595,737,859 737,751,853 751,764,859 764,1013,853 1013,1025,849 1025,1028,853 1028,1324,849 1324,1568,843 445,1568,991 445,447,1410 448,451,1401 451,456,1385 457,460,1363 461,464,1355 465,469,1349 470,478,1343 478,486,1336 487,490,1329 490,492,1253 492,496,1257 497,499,1263 499,501,1209 501,505,1183 505,511,1189 511,515,1167 515,517,1067 517,520,1023 520,528,1019 528,534,987 543,547,997 547,549,975 549,554,960 554,557,965 557,563,970 563,566,965 566,574,957 574,580,961 580,592,947 590,600,953 600,604,959 604,611,955 612,622,945 622,630,949 630,643,957 644,660,957 654,664,960 664,675,957 675,692,959 693,704,966 705,729,965 729,737,970 738,751,967 751,762,970 762,787,975 788,803,971 800,816,975 816,878,975 856,860,981 880,892,981 894,948,981 950,965,981 967,998,981 948,962,987 964,996,987 998,1074,987 1074,1100,987 1110,1113,987 1429,1431,987 1465,1467,987');
runs('#f00', B, '0,672,667 672,678,673 678,681,667 681,1387,673 0,250,705 250,444,699 444,451,695 451,474,699 474,739,695 739,1030,689 1030,1322,683 1322,1331,679 1331,1350,683 1350,1568,679 0,9,843 9,23,837 26,331,837 331,704,833 704,708,828 712,722,828 722,741,833 741,1069,827 1069,1170,821 1170,1175,817 1176,1188,821 1188,1291,817 1291,1412,811 1412,1513,805 1513,1568,801 32,93,987 93,181,981 181,237,975 237,281,971 281,395,965 395,480,959 487,601,955 601,700,949 706,718,949 718,800,945 800,883,939 883,1005,933 1005,1048,929 1048,1207,923 1207,1343,917 1343,1358,913 1358,1364,917 1364,1498,913 1498,1568,907 0,348,991 352,358,997 369,802,997 802,931,991 931,936,987 938,956,990 957,970,987 970,992,991 992,1005,987 1005,1065,991 1065,1568,991');
runs('#f00', C, '48,698,673 698,717,667 720,971,667 0,971,679 0,33,801 33,108,795 108,120,789 121,133,795 133,202,789 202,273,785 273,369,779 369,439,773 439,539,769 539,616,763 616,686,757 686,700,753 700,709,757 709,825,753 825,927,747 929,947,747 947,971,741 0,61,907 61,170,901 175,277,897 277,281,891 284,300,897 300,356,891 356,475,885 475,610,881 610,725,875 725,731,869 734,744,875 744,881,869 881,971,865 0,40,991 40,76,987 78,84,987 86,92,989 92,971,991');

for (const c in layers) {
  const p = document.createElementNS(NS, 'path');
  p.setAttribute('d', layers[c].join(''));
  p.setAttribute('fill', c);
  plot.appendChild(p);
}
```
